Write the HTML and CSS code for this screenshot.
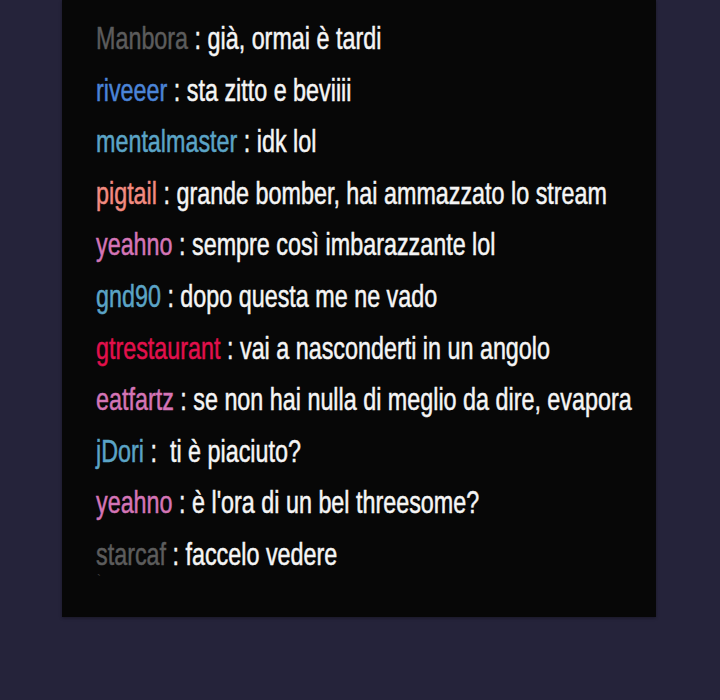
FILE: index.html
```html
<!DOCTYPE html>
<html>
<head>
<meta charset="utf-8">
<link rel="stylesheet" href="styles.css">
</head>
<body>
<div class="page">
  <div class="chat">
    <div class="msg"><span class="nick gray">Manbora</span> : già, ormai è tardi</div>
    <div class="msg"><span class="nick blue">riveeer</span> : sta zitto e beviiii</div>
    <div class="msg"><span class="nick teal">mentalmaster</span> : idk lol</div>
    <div class="msg"><span class="nick salmon">pigtail</span> : grande bomber, hai ammazzato lo stream</div>
    <div class="msg"><span class="nick pink">yeahno</span> : sempre così imbarazzante lol</div>
    <div class="msg"><span class="nick teal">gnd90</span> : dopo questa me ne vado</div>
    <div class="msg"><span class="nick red">gtrestaurant</span> : vai a nasconderti in un angolo</div>
    <div class="msg"><span class="nick pink">eatfartz</span> : se non hai nulla di meglio da dire, evapora</div>
    <div class="msg"><span class="nick teal">jDori</span> :&nbsp; ti è piaciuto?</div>
    <div class="msg"><span class="nick pink">yeahno</span> : è l'ora di un bel threesome?</div>
    <div class="msg"><span class="nick gray">starcaf</span> : faccelo vedere</div>
    <div class="tick">`</div>
  </div>
</div>
</body>
</html>
```
FILE: styles.css
```css
html, body {
  margin: 0;
  padding: 0;
  background: #25233a;
}
.page {
  width: 720px;
  height: 700px;
  display: flex;
  justify-content: flex-start;
  padding-left: 62px;
  box-sizing: border-box;
}
.chat {
  width: 594px;
  height: 617px;
  background: #070707;
  box-shadow: 0 1px 3px rgba(0,0,0,0.35);
  box-sizing: border-box;
  padding: 12px 0 0 34px;
  font-family: "Liberation Sans", Arial, sans-serif;
  font-size: 30.5px;
  color: #f5f5f5;
  overflow: hidden;
}
.msg {
  height: 51.6px;
  line-height: 52px;
  white-space: nowrap;
  transform: scaleX(0.765);
  transform-origin: 0 50%;
  -webkit-text-stroke: 0.5px currentColor;
}
.nick.gray { color: #5c5c5c; }
.nick.blue { color: #4b84d8; }
.nick.teal { color: #5ba4c6; }
.nick.salmon { color: #f28b80; }
.nick.pink { color: #d475b6; }
.nick.red { color: #e2104c; }
.tick {
  color: #3c3c3c;
  font-size: 12px;
  line-height: 12px;
  margin-top: -6px;
  padding-left: 1px;
}
```
